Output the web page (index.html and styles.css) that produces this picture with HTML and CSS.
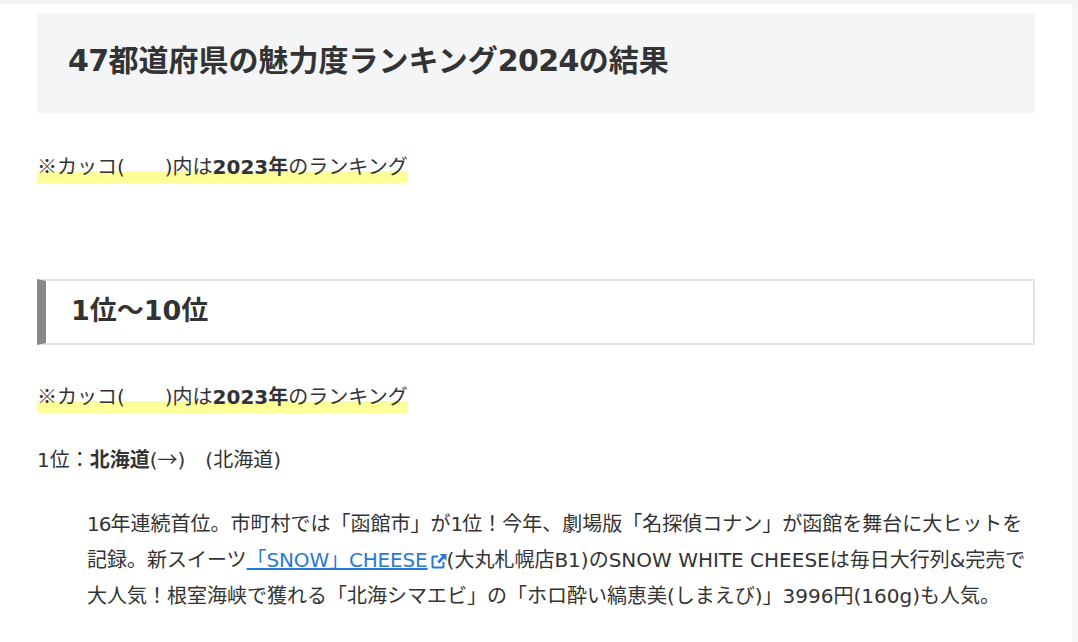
FILE: index.html
```html
<!DOCTYPE html>
<html lang="ja">
<head>
<meta charset="utf-8">
<title>47都道府県の魅力度ランキング2024の結果</title>
<link rel="stylesheet" href="styles.css">
</head>
<body>
<div class="page">
<main class="content">
<h2 class="title"><span class="num">47</span>都道府県の魅力度ランキング<span class="num">2024</span>の結果</h2>
<p class="note"><span class="marker"><span class="cjk">※</span>カッコ(　　)内は<strong>2023年</strong>のランキング</span></p>
<h3 class="section">1位〜10位</h3>
<p class="note2"><span class="marker"><span class="cjk">※</span>カッコ(　　)内は<strong>2023年</strong>のランキング</span></p>
<p class="rank">1位：<strong>北海道</strong>(<span class="cjk">→</span>)　(北海道)</p>
<p class="desc"><span class="tight">16</span>年連続首位。市町村では「函館市」が<span class="tight">1</span>位！今年、劇場版「名探偵コナン」が函館を舞台に大ヒットを記録。新スイーツ<a class="ext" href="#"><span class="ext-text">「SNOW」CHEESE</span><svg class="ext-icon" viewBox="0 0 16 16" width="16" height="16"><path d="M12.5 9v4.5a1 1 0 0 1-1 1h-9a1 1 0 0 1-1-1v-9a1 1 0 0 1 1-1H7" fill="none" stroke="currentColor" stroke-width="2"/><path d="M8.5 1h7v7l-2.4-2.4-4.8 4.8-2-2 4.8-4.8z" fill="currentColor"/></svg></a>(大丸札幌店B1)のSNOW WHITE CHEESEは毎日大行列&amp;完売で大人気！根室海峡で獲れる「北海シマエビ」の「ホロ酔い縞恵美(しまえび)」3996円(160g)も人気。</p>
</main>
</div>
</body>
</html>
```
FILE: styles.css
```css
* { box-sizing: border-box; }
html, body { margin: 0; padding: 0; height: 100%; overflow: hidden; }
body {
  background: #fff;
  color: #333;
  font-family: "DejaVu Sans", "Noto Sans CJK JP", sans-serif;
  font-size: 20px;
  line-height: 1.8;
}
.page {
  height: 642px;
  border-top: 4px solid #f2f2f2;
  border-right: 6px solid #f5f6f8;
  padding: 9px 37px 0;
}
.content { width: 998px; }
.title {
  margin: 0 0 37px;
  padding: 24px 31px;
  height: 100px;
  background: #f4f5f7;
  border-radius: 2px;
  font-size: 30px;
  line-height: 48px;
  font-weight: 700;
}
.num { letter-spacing: -0.6px; }
.tight { letter-spacing: -1px; }
.cjk { font-family: "Noto Sans CJK JP", sans-serif; line-height: 1; }
.note, .note2, .rank { margin: 0; }
.note { line-height: 34px; }
.marker { background: linear-gradient(transparent 56%, #ff9 56%); padding-bottom: 4px; }
.section {
  margin: 95px 0 35px;
  height: 66px;
  padding: 0 25px;
  border: 2px solid #e3e3e3;
  border-left: 9px solid #888;
  font-size: 27px;
  line-height: 59px;
  font-weight: 700;
}
.note2 { line-height: 34px; }
.rank { margin-top: 29px; line-height: 34px; }
.desc { margin: 29px 0 0 50px; line-height: 36px; }
.ext { color: #2a78d8; text-decoration: none; }
.ext-text { text-decoration: underline; letter-spacing: -0.15px; }
.ext-icon { vertical-align: -2px; margin-left: 3px; }
```
